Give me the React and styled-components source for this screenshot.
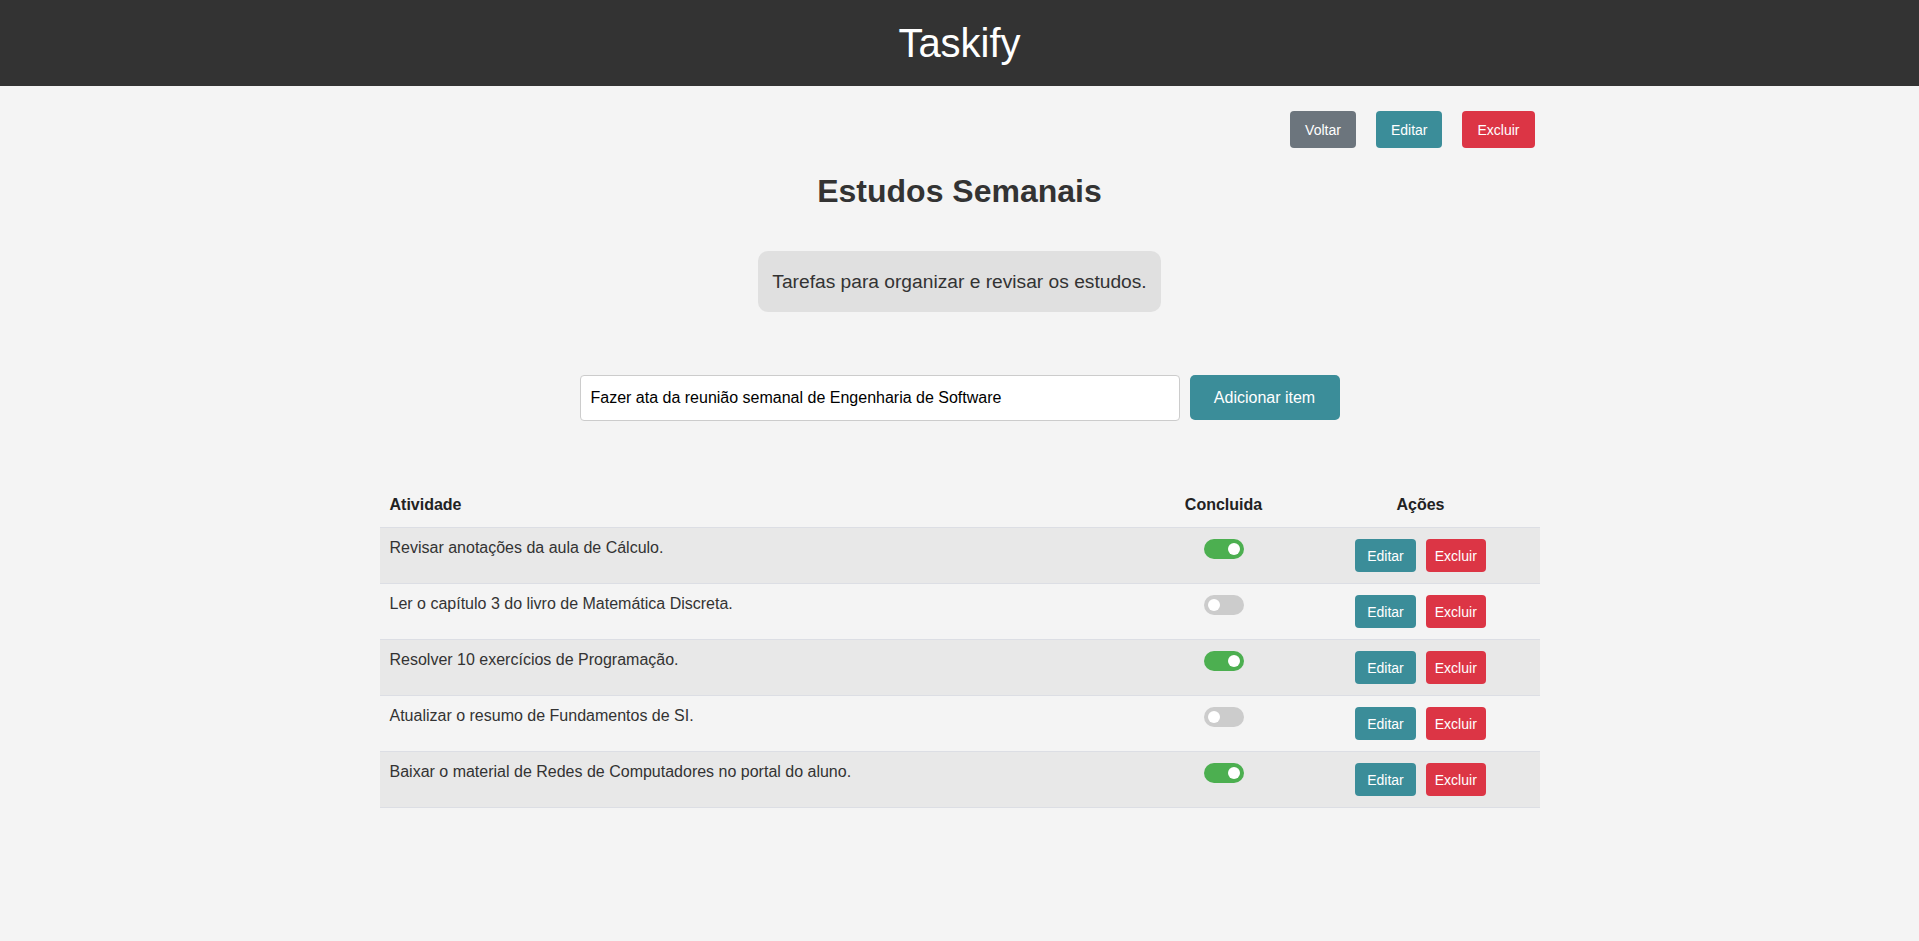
import React, { useState } from "react";
import styled, { createGlobalStyle } from "styled-components";

const GlobalStyle = createGlobalStyle`
  body {
    margin: 0;
    background-color: #f4f4f4;
    font-family: "Liberation Sans", Arial, sans-serif;
    color: #333;
  }
  * {
    box-sizing: border-box;
  }
`;

const tarefasIniciais = [
  { id: 1, texto: "Revisar anotações da aula de Cálculo.", feita: true },
  { id: 2, texto: "Ler o capítulo 3 do livro de Matemática Discreta.", feita: false },
  { id: 3, texto: "Resolver 10 exercícios de Programação.", feita: true },
  { id: 4, texto: "Atualizar o resumo de Fundamentos de SI.", feita: false },
  { id: 5, texto: "Baixar o material de Redes de Computadores no portal do aluno.", feita: true },
];

const cores = {
  voltar: "#6c757d",
  editar: "#3b8d99",
  excluir: "#dc3545",
};

const App = () => {
  const [tarefas, setTarefas] = useState(tarefasIniciais);
  const [novoItem, setNovoItem] = useState(
    "Fazer ata da reunião semanal de Engenharia de Software"
  );

  const alternar = (id) => {
    setTarefas(tarefas.map((t) => (t.id === id ? { ...t, feita: !t.feita } : t)));
  };

  return (
    <>
      <GlobalStyle />
      <Header>
        <h1>Taskify</h1>
      </Header>
      <Container>
        <TopBar>
          <TopButton $cor={cores.voltar}>Voltar</TopButton>
          <TopButton $cor={cores.editar}>Editar</TopButton>
          <TopButton $cor={cores.excluir}>Excluir</TopButton>
        </TopBar>

        <Titulo>Estudos Semanais</Titulo>

        <DescricaoWrapper>
          <Descricao>Tarefas para organizar e revisar os estudos.</Descricao>
        </DescricaoWrapper>

        <Form onSubmit={(e) => e.preventDefault()}>
          <Input value={novoItem} onChange={(e) => setNovoItem(e.target.value)} />
          <AddButton type="submit">Adicionar item</AddButton>
        </Form>

        <Tabela>
          <colgroup>
            <col style={{ width: 766 }} />
            <col style={{ width: 156 }} />
            <col style={{ width: 238 }} />
          </colgroup>
          <thead>
            <tr>
              <Th>Atividade</Th>
              <Th $center>Concluida</Th>
              <Th $center>Ações</Th>
            </tr>
          </thead>
          <tbody>
            {tarefas.map((t, idx) => (
              <Row key={t.id} $odd={idx % 2 === 0}>
                <Td>{t.texto}</Td>
                <Td $center>
                  <Switch $on={t.feita} onClick={() => alternar(t.id)} />
                </Td>
                <Td $center>
                  <Acoes>
                    <RowButton $cor={cores.editar} $pad="12px">Editar</RowButton>
                    <RowButton $cor={cores.excluir} $pad="9px">Excluir</RowButton>
                  </Acoes>
                </Td>
              </Row>
            ))}
          </tbody>
        </Tabela>
      </Container>
    </>
  );
};

const Header = styled.header`
  height: 86px;
  background-color: #333;
  color: #fff;
  display: flex;
  align-items: center;
  justify-content: center;

  h1 {
    margin: 0;
    font-size: 40px;
    font-weight: normal;
  }
`;

const Container = styled.main`
  width: 1160px;
  margin: 0 auto;
  padding-bottom: 40px;
`;

const TopBar = styled.div`
  display: flex;
  justify-content: flex-end;
  gap: 20px;
  margin-top: 25px;
  padding-right: 5px;
`;

const TopButton = styled.button`
  background-color: ${(p) => p.$cor};
  color: #fff;
  border: none;
  border-radius: 4px;
  padding: 0 15px;
  height: 37px;
  font-family: inherit;
  font-size: 14px;
  cursor: pointer;
`;

const Titulo = styled.h2`
  margin: 25px 0 0;
  text-align: center;
  font-size: 32px;
  line-height: 37px;
  font-weight: bold;
  color: #333;
`;

const DescricaoWrapper = styled.div`
  display: flex;
  justify-content: center;
  margin-top: 41px;
`;

const Descricao = styled.p`
  margin: 0;
  padding: 19px 14px;
  background-color: #e0e0e0;
  border-radius: 10px;
  font-size: 19.2px;
  line-height: 23px;
  color: #333;
`;

const Form = styled.form`
  display: flex;
  justify-content: center;
  gap: 10px;
  margin-top: 63px;
`;

const Input = styled.input`
  width: 600px;
  height: 46px;
  padding: 0 10px;
  border: 1px solid #ccc;
  border-radius: 4px;
  background-color: #fff;
  font-family: inherit;
  font-size: 16px;
  color: #000;
  outline: none;
`;

const AddButton = styled.button`
  width: 150px;
  height: 45px;
  border: none;
  border-radius: 5px;
  background-color: ${cores.editar};
  color: #fff;
  font-family: inherit;
  font-size: 16px;
  cursor: pointer;
`;

const Tabela = styled.table`
  width: 100%;
  margin-top: 62px;
  border-collapse: collapse;
  table-layout: fixed;
`;

const Th = styled.th`
  padding: 13px 10px;
  text-align: ${(p) => (p.$center ? "center" : "left")};
  font-size: 16px;
  font-weight: bold;
  color: #222;
  border-bottom: 1px solid #dcdee4;
`;

const Row = styled.tr`
  background-color: ${(p) => (p.$odd ? "#e8e8e8" : "transparent")};
  border-bottom: 1px solid #dcdee4;
`;

const Td = styled.td`
  padding: 11px 10px;
  vertical-align: top;
  text-align: ${(p) => (p.$center ? "center" : "left")};
  font-size: 16px;
  line-height: 18px;
  color: #333;
`;

const Switch = styled.span`
  position: relative;
  display: inline-block;
  width: 40px;
  height: 20px;
  border-radius: 10px;
  background-color: ${(p) => (p.$on ? "#4caf50" : "#ccc")};
  cursor: pointer;

  &::after {
    content: "";
    position: absolute;
    top: 4px;
    left: ${(p) => (p.$on ? "24px" : "4px")};
    width: 12px;
    height: 12px;
    border-radius: 50%;
    background-color: #fff;
  }
`;

const Acoes = styled.div`
  display: flex;
  justify-content: center;
  gap: 10px;
`;

const RowButton = styled.button`
  background-color: ${(p) => p.$cor};
  color: #fff;
  border: none;
  border-radius: 4px;
  height: 33px;
  padding: 0 ${(p) => p.$pad};
  font-family: inherit;
  font-size: 14px;
  cursor: pointer;
`;

export default App;
